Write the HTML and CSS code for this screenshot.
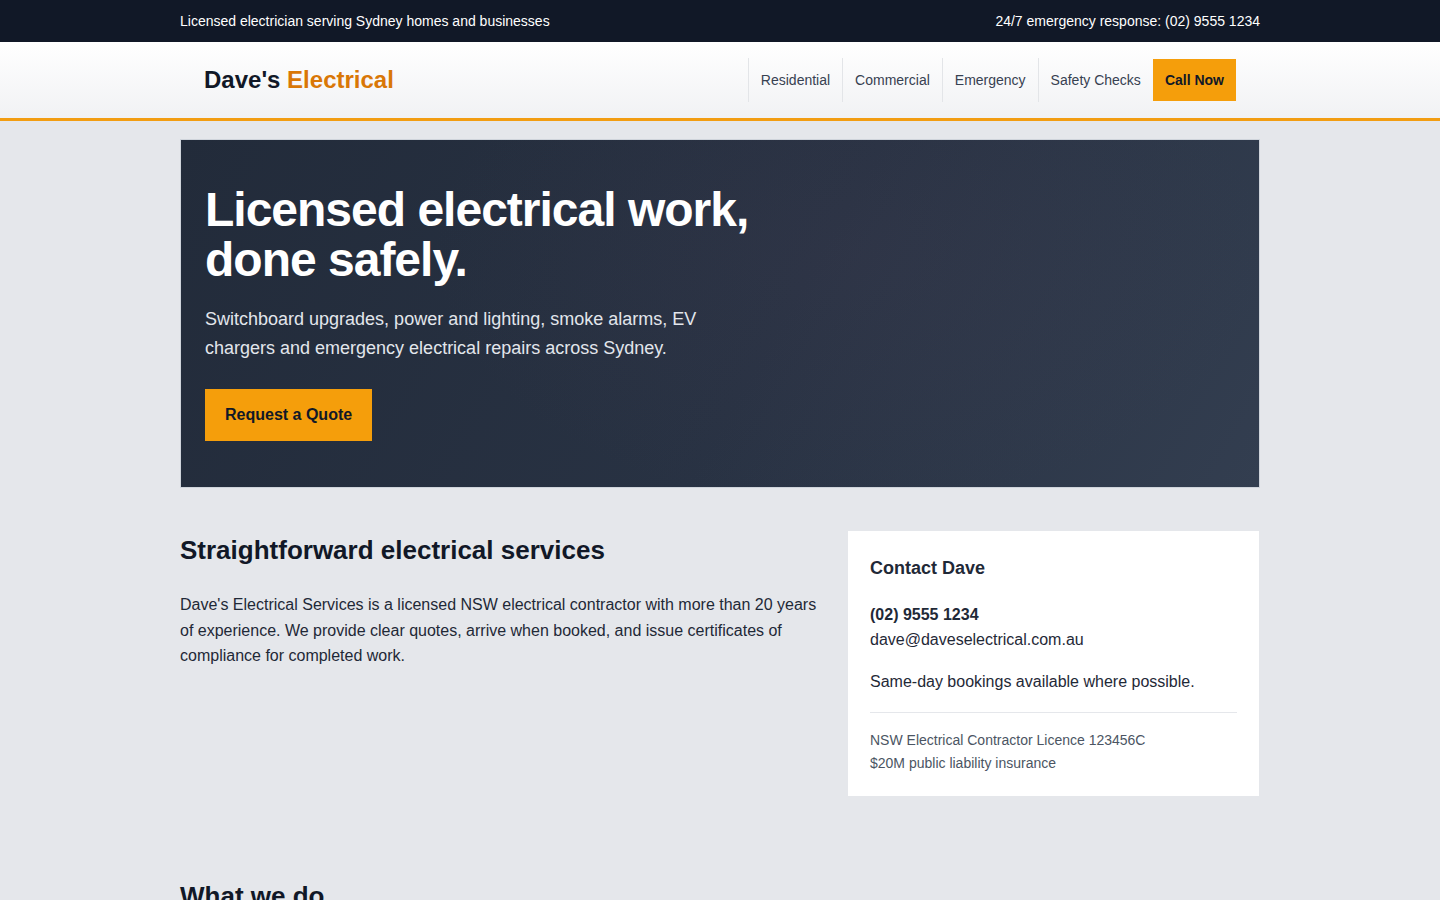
FILE: index.html
```html
<!DOCTYPE html>
<html lang="en">
<head>
<meta charset="utf-8">
<title>Dave's Electrical</title>
<link rel="stylesheet" href="styles.css">
</head>
<body>
<div class="topbar">
  <div class="container topbar-inner">
    <span>Licensed electrician serving Sydney homes and businesses</span>
    <span>24/7 emergency response: (02) 9555 1234</span>
  </div>
</div>
<header class="header">
  <div class="container header-inner">
    <a class="logo" href="#">Dave's <span class="logo-accent">Electrical</span></a>
    <nav class="nav">
      <a class="nav-link" href="#">Residential</a>
      <a class="nav-link" href="#">Commercial</a>
      <a class="nav-link" href="#">Emergency</a>
      <a class="nav-link" href="#">Safety Checks</a>
      <a class="nav-cta" href="#">Call Now</a>
    </nav>
  </div>
</header>
<main class="container main">
  <section class="hero">
    <div class="hero-content">
      <h1 class="hero-title">Licensed electrical work, done safely.</h1>
      <p class="hero-text">Switchboard upgrades, power and lighting, smoke alarms, EV chargers and emergency electrical repairs across Sydney.</p>
      <a class="btn" href="#">Request a Quote</a>
    </div>
  </section>
  <section class="intro">
    <div class="intro-text">
      <h2 class="section-title">Straightforward electrical services</h2>
      <p class="body-text">Dave's Electrical Services is a licensed NSW electrical contractor with more than 20 years of experience. We provide clear quotes, arrive when booked, and issue certificates of compliance for completed work.</p>
    </div>
    <aside class="card">
      <h3 class="card-title">Contact Dave</h3>
      <p class="card-text"><strong>(02) 9555 1234</strong><br>dave@daveselectrical.com.au</p>
      <p class="card-text">Same-day bookings available where possible.</p>
      <hr class="card-rule">
      <p class="card-small">NSW Electrical Contractor Licence 123456C<br>$20M public liability insurance</p>
    </aside>
  </section>
  <section class="services">
    <h2 class="section-title">What we do</h2>
    <div class="service-grid">
      <div class="service"><h3>Switchboard upgrades</h3><p>Modern safety switches and circuit protection.</p></div>
      <div class="service"><h3>Power and lighting</h3><p>New points, LED lighting and rewiring.</p></div>
      <div class="service"><h3>Smoke alarms</h3><p>Compliant installation and testing.</p></div>
    </div>
  </section>
</main>
</body>
</html>
```
FILE: styles.css
```css
* { box-sizing: border-box; }
html, body { margin: 0; padding: 0; }
body {
  font-family: "Liberation Sans", Arial, sans-serif;
  background: #e5e7eb;
  color: #1f2937;
}
a { text-decoration: none; color: inherit; }
.container {
  width: 1080px;
  margin: 0 auto;
}
.topbar {
  background: #111827;
  color: #ffffff;
  font-size: 14px;
}
.topbar-inner {
  height: 42px;
  display: flex;
  align-items: center;
  justify-content: space-between;
}
.header {
  background: linear-gradient(180deg, #ffffff 0%, #f1f2f4 100%);
  border-bottom: 3px solid #f29d12;
}
.header-inner {
  height: 76px;
  padding: 0 24px;
  display: flex;
  align-items: center;
  justify-content: space-between;
}
.logo {
  font-size: 24px;
  font-weight: 700;
  color: #111827;
}
.logo-accent { color: #d97706; }
.nav {
  display: flex;
  align-items: center;
}
.nav-link {
  font-size: 14px;
  color: #374151;
  padding: 0 12px;
  height: 44px;
  line-height: 44px;
  border-left: 1px solid #e3e5e8;
}
.nav-cta {
  font-size: 14px;
  font-weight: 700;
  color: #111827;
  background: #f59e0b;
  padding: 0 12px;
  height: 42px;
  line-height: 42px;
}
.main { padding-top: 18px; }
.hero {
  border: 1px solid #cfd4db;
  background:
    radial-gradient(ellipse 420px 260px at 62% 32%, rgba(90, 70, 95, 0.12), rgba(90, 70, 95, 0) 100%),
    linear-gradient(120deg, #222b3a 0%, #283243 55%, #333e50 100%);
  padding: 45px 24px 46px;
  color: #ffffff;
}
.hero-content { max-width: 560px; }
.hero-title {
  margin: 0;
  font-size: 48px;
  line-height: 50px;
  letter-spacing: -1px;
  font-weight: 700;
}
.hero-text {
  margin: 20px 0 26px;
  font-size: 18px;
  line-height: 29px;
  color: #e2e6ec;
}
.btn {
  display: inline-block;
  background: #f59e0b;
  color: #111827;
  font-weight: 700;
  font-size: 16px;
  line-height: 20px;
  padding: 16px 20px;
}
.intro {
  margin-top: 43px;
  display: grid;
  grid-template-columns: 640px 411px;
  gap: 28px;
  align-items: start;
}
.section-title {
  margin: 4px 0 26px;
  font-size: 26px;
  line-height: 31px;
  font-weight: 700;
  color: #111827;
}
.body-text {
  margin: 0;
  font-size: 16px;
  line-height: 25.6px;
  color: #1f2937;
}
.card {
  background: #ffffff;
  padding: 26px 22px 21px;
}
.card-title {
  margin: 0 0 22px;
  font-size: 18px;
  line-height: 23px;
  font-weight: 700;
  color: #1f2937;
}
.card-text {
  margin: 0 0 17px;
  font-size: 16px;
  line-height: 25px;
  color: #1f2937;
}
.card-rule {
  border: 0;
  border-top: 1px solid #e5e7eb;
  margin: 18px 0 16px;
}
.card-small {
  margin: 0;
  font-size: 14px;
  line-height: 23px;
  color: #4b5563;
}
.services { margin-top: 85px; padding-bottom: 60px; }
.service-grid {
  display: grid;
  grid-template-columns: repeat(3, 1fr);
  gap: 24px;
}
.service {
  background: #ffffff;
  padding: 22px;
}
.service h3 { margin: 0 0 8px; font-size: 18px; color: #111827; }
.service p { margin: 0; font-size: 15px; line-height: 24px; color: #374151; }
```
